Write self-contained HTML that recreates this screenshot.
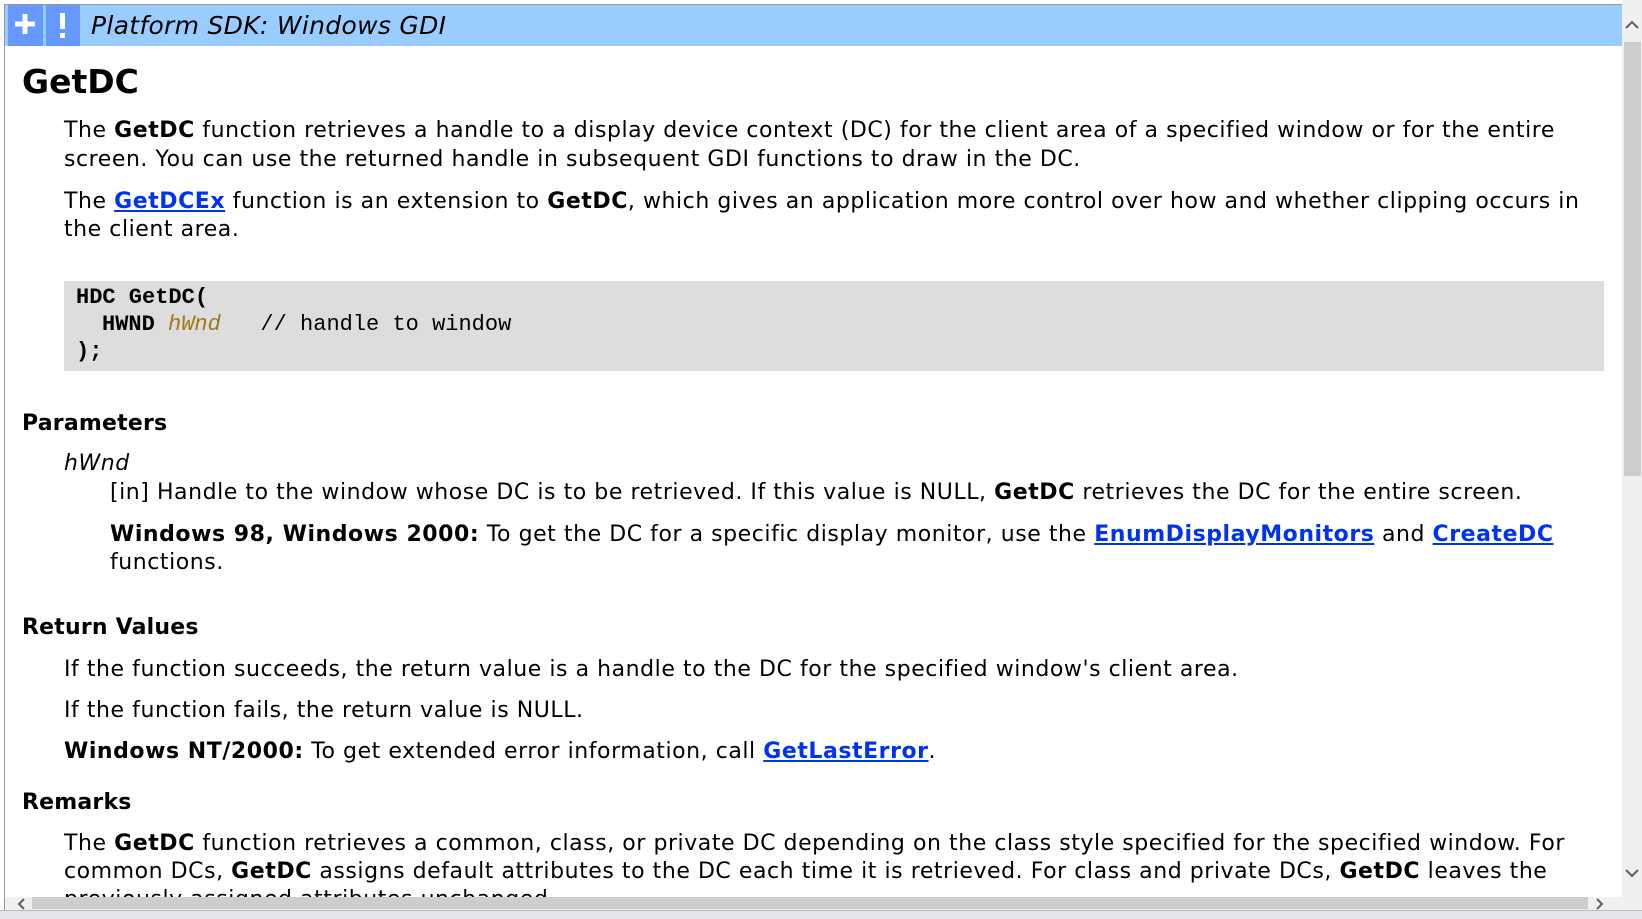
<!DOCTYPE html>
<html><head><meta charset="utf-8"><style>
*{margin:0;padding:0;box-sizing:border-box}
html,body{width:1642px;height:919px;overflow:hidden;background:#fff}
body{position:relative;font-family:"DejaVu Sans","Liberation Sans",sans-serif;font-size:22px;color:#000}
.l{position:absolute;white-space:nowrap;line-height:28px;letter-spacing:0.55px}
b{font-weight:bold}
a{color:#0033ee;font-weight:bold;text-decoration:underline}
h{font-weight:bold;font-size:22px;letter-spacing:0.2px}
.code{position:absolute;left:64px;top:281px;width:1540px;height:90px;background:#dddddd}
.c{position:absolute;white-space:pre;font-family:"Liberation Mono",monospace;font-size:22px;line-height:27px;color:#000}
</style></head><body>
<div style="position:absolute;left:4px;top:4px;width:1px;height:906px;background:#999"></div>
<div style="position:absolute;left:4px;top:4px;width:1618px;height:1px;background:#999"></div>
<div style="position:absolute;left:5px;top:5px;width:1617px;height:41px;background:#99ccff"></div>
<div style="position:absolute;left:8px;top:5px;width:35px;height:41px;background:#6699ff"></div>
<div style="position:absolute;left:46px;top:5px;width:34px;height:41px;background:#6699ff"></div>
<svg style="position:absolute;left:8px;top:5px" width="72" height="41"><path d="M17 9v20M7 19h20" stroke="#fff" stroke-width="5"/><rect x="52" y="8" width="5" height="16" fill="#fff"/><rect x="52" y="28" width="5" height="5" fill="#fff"/></svg>
<div class="l" style="left:91px;top:10px;font-style:italic;font-size:25px;line-height:32px;letter-spacing:0.3px">Platform SDK: Windows GDI</div>
<div class="l" style="left:22px;top:61px;font-size:33px;font-weight:bold;line-height:42px;letter-spacing:0">GetDC</div>
<div class="l" style="left:64px;top:117px">The <b>GetDC</b> function retrieves a handle to a display device context (DC) for the client area of a specified window or for the entire</div>
<div class="l" style="left:64px;top:146px">screen. You can use the returned handle in subsequent GDI functions to draw in the DC.</div>
<div class="l" style="left:64px;top:188px">The <a>GetDCEx</a> function is an extension to <b>GetDC</b>, which gives an application more control over how and whether clipping occurs in</div>
<div class="l" style="left:64px;top:216px">the client area.</div>
<div class="code"></div>
<div class="c" style="left:76px;top:284px;font-weight:bold">HDC GetDC(</div>
<div class="c" style="left:102px;top:311px"><b>HWND</b> <i style="color:#a07818">hWnd</i>   // handle to window</div>
<div class="c" style="left:76px;top:338px;font-weight:bold">);</div>
<div class="l" style="left:22px;top:410px"><h>Parameters</h></div>
<div class="l" style="left:64px;top:450px;font-style:italic">hWnd</div>
<div class="l" style="left:110px;top:479px">[in] Handle to the window whose DC is to be retrieved. If this value is NULL, <b>GetDC</b> retrieves the DC for the entire screen.</div>
<div class="l" style="left:110px;top:521px"><b>Windows 98, Windows 2000:</b> To get the DC for a specific display monitor, use the <a>EnumDisplayMonitors</a> and <a>CreateDC</a></div>
<div class="l" style="left:110px;top:549px">functions.</div>
<div class="l" style="left:22px;top:614px"><h>Return Values</h></div>
<div class="l" style="left:64px;top:656px">If the function succeeds, the return value is a handle to the DC for the specified window's client area.</div>
<div class="l" style="left:64px;top:697px">If the function fails, the return value is NULL.</div>
<div class="l" style="left:64px;top:738px"><b>Windows NT/2000:</b> To get extended error information, call <a>GetLastError</a>.</div>
<div class="l" style="left:22px;top:789px"><h>Remarks</h></div>
<div class="l" style="left:64px;top:830px">The <b>GetDC</b> function retrieves a common, class, or private DC depending on the class style specified for the specified window. For</div>
<div class="l" style="left:64px;top:858px">common DCs, <b>GetDC</b> assigns default attributes to the DC each time it is retrieved. For class and private DCs, <b>GetDC</b> leaves the</div>
<div class="l" style="left:64px;top:886px">previously assigned attributes unchanged.</div>
<div style="position:absolute;left:1622px;top:0;width:20px;height:910px;background:#f0f0f0"></div>
<div style="position:absolute;left:1624px;top:42px;width:17px;height:434px;background:#cdcdcd"></div>
<svg style="position:absolute;left:1622px;top:14px" width="20" height="20"><path d="M4 14l6-6 6 6" stroke="#606060" stroke-width="2" fill="none"/></svg>
<svg style="position:absolute;left:1622px;top:864px" width="20" height="20"><path d="M4 6l6 6 6-6" stroke="#606060" stroke-width="2" fill="none"/></svg>
<div style="position:absolute;left:5px;top:897px;width:1617px;height:13px;background:#f0f0f0"></div>
<div style="position:absolute;left:32px;top:897px;width:1556px;height:12px;background:#cdcdcd"></div>
<svg style="position:absolute;left:14px;top:897px" width="16" height="13"><path d="M10 2l-5 5 5 5" stroke="#606060" stroke-width="2" fill="none"/></svg>
<svg style="position:absolute;left:1592px;top:897px" width="16" height="13"><path d="M5 2l5 5-5 5" stroke="#606060" stroke-width="2" fill="none"/></svg>
<div style="position:absolute;left:0;top:910px;width:1642px;height:9px;background:#e4e4ec;border-top:1px solid #bbb"></div>
</body></html>
